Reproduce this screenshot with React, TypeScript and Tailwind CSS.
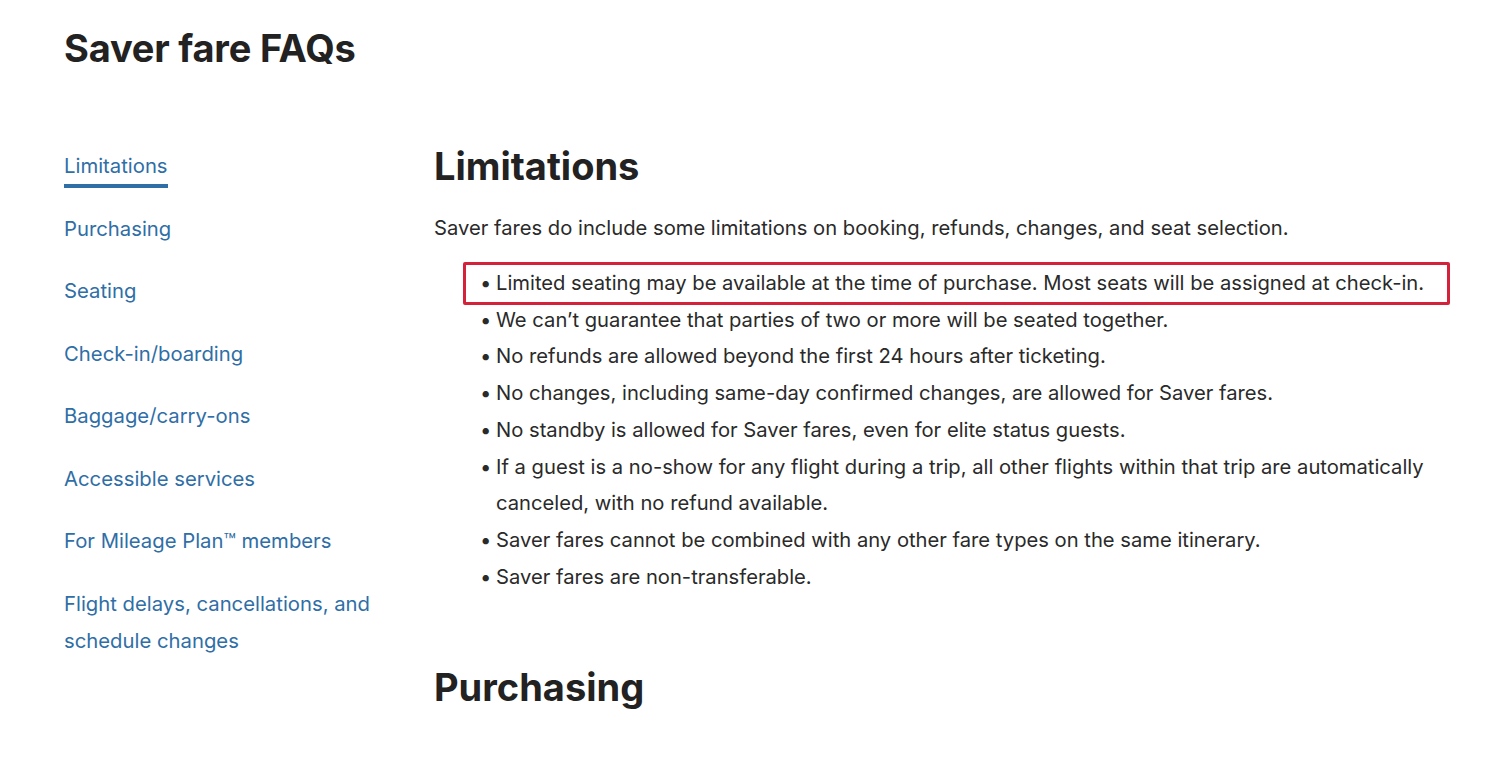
import React from "react";

const links = [
  "Limitations",
  "Purchasing",
  "Seating",
  "Check-in/boarding",
  "Baggage/carry-ons",
  "Accessible services",
  "For Mileage Plan™ members",
  "Flight delays, cancellations, and schedule changes",
];

const bullets = [
  "We can’t guarantee that parties of two or more will be seated together.",
  "No refunds are allowed beyond the first 24 hours after ticketing.",
  "No changes, including same-day confirmed changes, are allowed for Saver fares.",
  "No standby is allowed for Saver fares, even for elite status guests.",
  "If a guest is a no-show for any flight during a trip, all other flights within that trip are automatically canceled, with no refund available.",
  "Saver fares cannot be combined with any other fare types on the same itinerary.",
  "Saver fares are non-transferable.",
];

export default function App() {
  return (
    <div
      className="w-[1500px] h-[758px] bg-white overflow-hidden text-[#2a2a2a]"
      style={{ fontFamily: "Inter, 'Noto Sans', sans-serif" }}
    >
      <div className="pl-[64px] pt-[24px]">
        <h1 className="text-[38px] font-bold leading-[48px] tracking-[-0.2px] text-[#222]">
          Saver fare FAQs
        </h1>
      </div>
      <div className="flex pl-[64px] pt-[68px]">
        <nav className="w-[370px] shrink-0 flex flex-col gap-[25.5px] pt-[7px]">
          {links.map((l, i) => (
            <div key={l} className="w-[316px]">
              <span
                className={
                  "inline-block text-[20.3px] leading-[37px] text-[#2f6ea6] " +
                  (i === 0 ? "border-b-[4px] border-[#2f6ea6] -mb-[4px]" : "")
                }
              >
                {l}
              </span>
            </div>
          ))}
        </nav>
        <main className="flex-1">
          <h2 className="text-[38px] font-bold leading-[50px] text-[#222] mt-[1px]">
            Limitations
          </h2>
          <p className="mt-[18px] text-[20.2px] leading-[37px]">
            Saver fares do include some limitations on booking, refunds, changes, and seat selection.
          </p>
          <ul className="mt-[19px] text-[20.2px] leading-[36.7px] w-[1000px]">
            <li className="ml-[29px] w-[987px] border-[3px] border-[#d3223a] rounded-[2px] pl-[14px] -my-[3px] flex">
              <span className="w-[16px] shrink-0">•</span>
              <span>Limited seating may be available at the time of purchase. Most seats will be assigned at check-in.</span>
            </li>
            {bullets.map((b) => (
              <li key={b} className="ml-[46px] flex">
                <span className="w-[16px] shrink-0">•</span>
                <span className="w-[945px]">{b}</span>
              </li>
            ))}
          </ul>
          <h2 className="mt-[67px] text-[38px] font-bold leading-[50px] text-[#222]">
            Purchasing
          </h2>
        </main>
      </div>
    </div>
  );
}
